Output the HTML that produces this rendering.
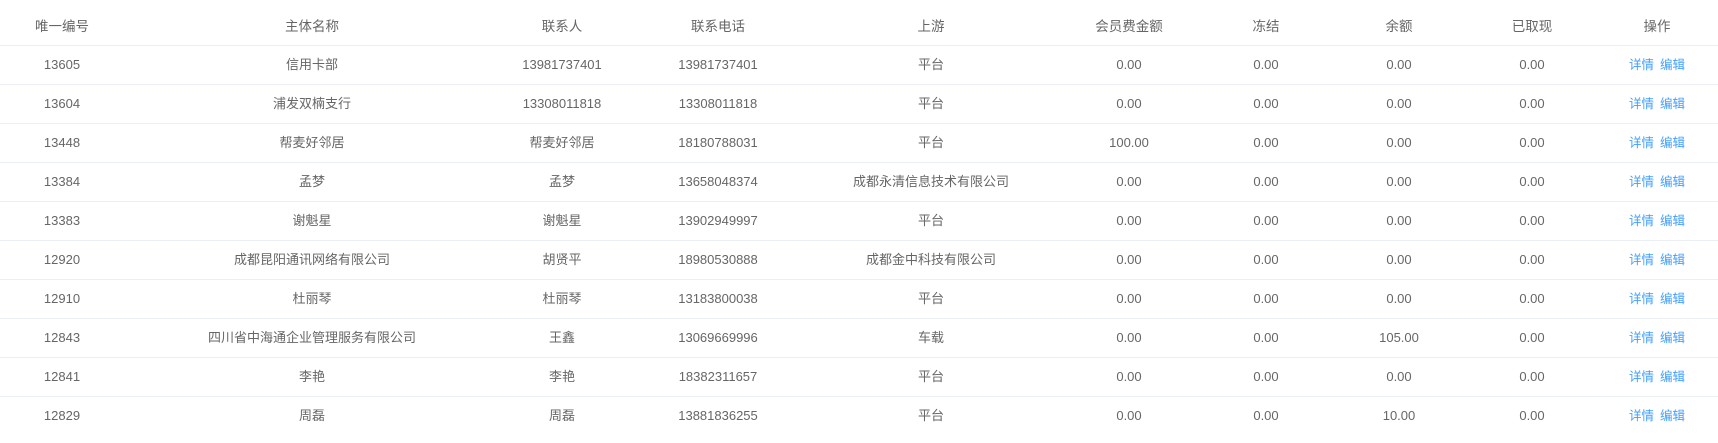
<!DOCTYPE html>
<html><head><meta charset="utf-8"><style>
html,body{margin:0;padding:0;background:#fff;width:1718px;height:443px;overflow:hidden}
table{border-collapse:collapse;table-layout:fixed;width:1724px;font-family:"Liberation Sans","Noto Sans CJK SC",sans-serif;font-size:13px;color:#666}
th{font-weight:normal;height:45px;padding:0;text-align:center;border-bottom:1px solid #ebeef5;color:#666;font-size:13.5px;box-sizing:border-box;padding-top:6px}
td{height:39px;padding:0;text-align:center;border-bottom:1px solid #ebeef5;box-sizing:border-box;line-height:16px}
tr:last-child td{border-bottom:none}
a{color:#409eff;text-decoration:none;font-size:12.5px;margin:0 3px}
</style></head><body>
<table>
<colgroup><col style="width:124px"><col style="width:376px"><col style="width:124px"><col style="width:188px"><col style="width:238px"><col style="width:158px"><col style="width:116px"><col style="width:150px"><col style="width:116px"><col style="width:134px"></colgroup>
<tr><th>唯一编号</th><th>主体名称</th><th>联系人</th><th>联系电话</th><th>上游</th><th>会员费金额</th><th>冻结</th><th>余额</th><th>已取现</th><th>操作</th></tr>
<tr><td>13605</td><td>信用卡部</td><td>13981737401</td><td>13981737401</td><td>平台</td><td>0.00</td><td>0.00</td><td>0.00</td><td>0.00</td><td><a>详情</a><a>编辑</a></td></tr>
<tr><td>13604</td><td>浦发双楠支行</td><td>13308011818</td><td>13308011818</td><td>平台</td><td>0.00</td><td>0.00</td><td>0.00</td><td>0.00</td><td><a>详情</a><a>编辑</a></td></tr>
<tr><td>13448</td><td>帮麦好邻居</td><td>帮麦好邻居</td><td>18180788031</td><td>平台</td><td>100.00</td><td>0.00</td><td>0.00</td><td>0.00</td><td><a>详情</a><a>编辑</a></td></tr>
<tr><td>13384</td><td>孟梦</td><td>孟梦</td><td>13658048374</td><td>成都永清信息技术有限公司</td><td>0.00</td><td>0.00</td><td>0.00</td><td>0.00</td><td><a>详情</a><a>编辑</a></td></tr>
<tr><td>13383</td><td>谢魁星</td><td>谢魁星</td><td>13902949997</td><td>平台</td><td>0.00</td><td>0.00</td><td>0.00</td><td>0.00</td><td><a>详情</a><a>编辑</a></td></tr>
<tr><td>12920</td><td>成都昆阳通讯网络有限公司</td><td>胡贤平</td><td>18980530888</td><td>成都金中科技有限公司</td><td>0.00</td><td>0.00</td><td>0.00</td><td>0.00</td><td><a>详情</a><a>编辑</a></td></tr>
<tr><td>12910</td><td>杜丽琴</td><td>杜丽琴</td><td>13183800038</td><td>平台</td><td>0.00</td><td>0.00</td><td>0.00</td><td>0.00</td><td><a>详情</a><a>编辑</a></td></tr>
<tr><td>12843</td><td>四川省中海通企业管理服务有限公司</td><td>王鑫</td><td>13069669996</td><td>车载</td><td>0.00</td><td>0.00</td><td>105.00</td><td>0.00</td><td><a>详情</a><a>编辑</a></td></tr>
<tr><td>12841</td><td>李艳</td><td>李艳</td><td>18382311657</td><td>平台</td><td>0.00</td><td>0.00</td><td>0.00</td><td>0.00</td><td><a>详情</a><a>编辑</a></td></tr>
<tr><td>12829</td><td>周磊</td><td>周磊</td><td>13881836255</td><td>平台</td><td>0.00</td><td>0.00</td><td>10.00</td><td>0.00</td><td><a>详情</a><a>编辑</a></td></tr>
</table>
</body></html>
